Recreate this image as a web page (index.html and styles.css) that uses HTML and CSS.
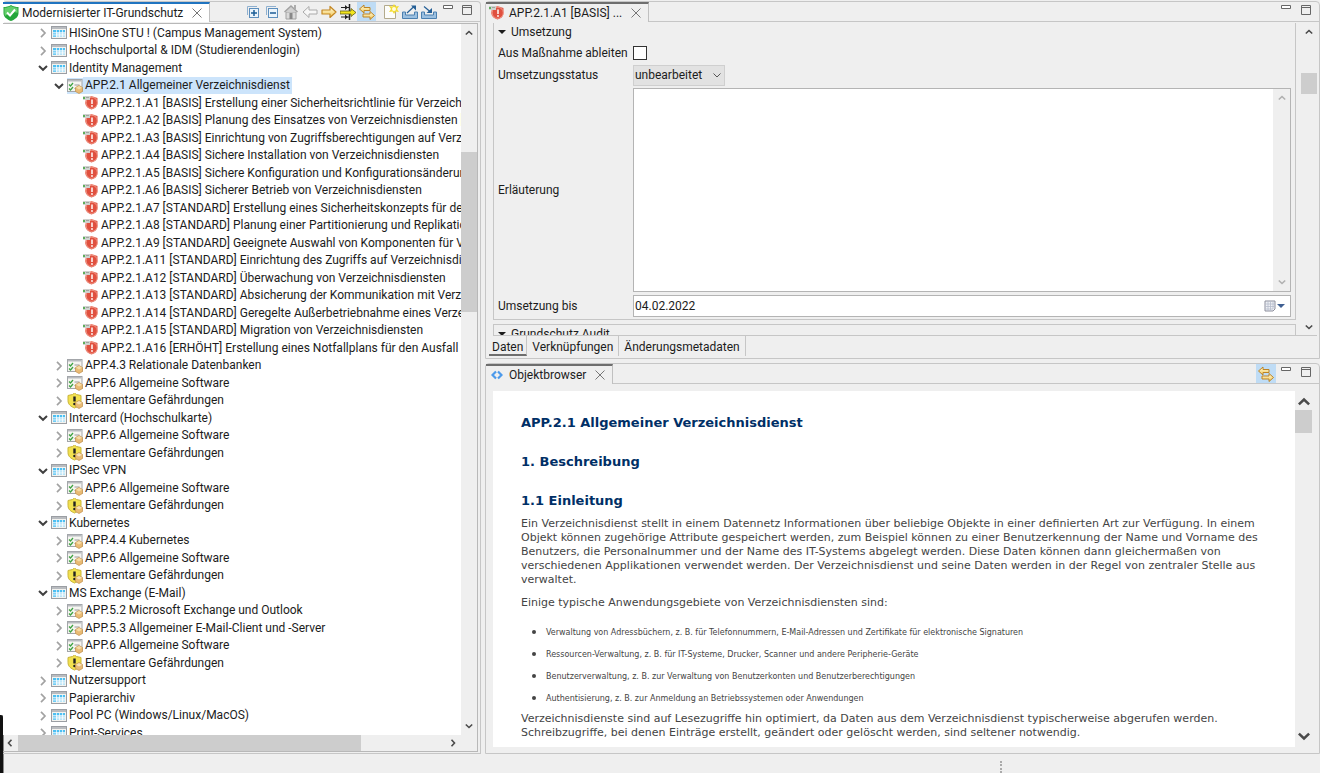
FILE: index.html
```html
<!DOCTYPE html>
<html lang="de">
<head>
<meta charset="utf-8">
<title>Modernisierter IT-Grundschutz</title>
<link rel="stylesheet" href="styles.css">
</head>
<body>
<svg class="defs" aria-hidden="true">
  <defs>
    <linearGradient id="g-gold" x2="0" y2="1"><stop offset="0" stop-color="#fffbe0"/><stop offset="1" stop-color="#f3c752"/></linearGradient>
    <linearGradient id="g-red" x1="0" x2="1" y2="1"><stop offset="0" stop-color="#f0907e"/><stop offset="1" stop-color="#d53a2e"/></linearGradient>
    <symbol id="i-closed" viewBox="0 0 12 12"><path d="M4 1.8 8 6 4 10.2" fill="none" stroke="#a2a2a2" stroke-width="1.7"/></symbol>
    <symbol id="i-open" viewBox="0 0 12 12"><path d="M2 4 6 7.8 10 4" fill="none" stroke="#404040" stroke-width="2"/></symbol>
    <symbol id="i-table" viewBox="0 0 16 16"><rect x=".5" y="1.500" width="15" height="12" fill="#f4f3ef" stroke="#9b9ea3"/><path d="M1 2h14v2H1z" fill="#b9bcc0"/><path d="M2 5h12v7H2z" fill="#b9e4f7"/><path d="M2 5h12v2.500H2z" fill="#4dbff2"/><path d="M2 7h3v5H2z" fill="#6fccf5"/><path d="M5.500 5v7M8.500 5v7M11.500 5v7M2 7.700h12M2 9.900h12" stroke="#fff" stroke-width=".7"/></symbol>
    <symbol id="i-module" viewBox="0 0 16 16"><rect x=".5" y="1.500" width="14.500" height="12" fill="#f6f5f1" stroke="#a3a6aa"/><path d="M1 2h13.500v1.500H1z" fill="#b9bcc0"/><path d="m2 6.500 1.500 1.500L6 5M2 10.500 3.500 12 6 9" fill="none" stroke="#3fa343" stroke-width="1.300"/><path d="M7.500 7h5M7.500 10.500h2" stroke="#9a9a9a"/><path d="m12 7.500 3.500 2v4L12 15.500l-3.500-2v-4z" fill="#e9bb74" stroke="#c28f49" stroke-width=".7"/><path d="m12 8 3 1.700-3 1.800-3-1.800z" fill="#f7dda8"/></symbol>
    <symbol id="i-threat" viewBox="0 0 16 16"><path d="M7.500 0 9.500 1.500 14 2.500v5c0 4-3 6-6.500 7.500C4 13.500 1 11.500 1 7.500v-5l4.500-1z" fill="#f2e14f" stroke="#c9b53b"/><path d="M7.500 3.500v5" stroke="#222" stroke-width="2.400"/><circle cx="7.500" cy="11" r="1.300" fill="#222"/><path d="m12 7.500 3.500 2v4L12 15.500l-3.500-2v-4z" fill="#e9bb74" stroke="#c28f49" stroke-width=".7"/><path d="m12 8 3 1.700-3 1.800-3-1.800z" fill="#f9e3b7"/></symbol>
    <symbol id="i-req" viewBox="0 0 16 16"><path d="M3 3 8.500 1l6 2v5c0 3.500-2.500 5.500-6 6.500C5 13.500 2.500 11.500 2 8z" fill="url(#g-red)"/><circle cx="8.700" cy="7.800" r="5.600" fill="#e0503f" stroke="#f3a292" stroke-width=".8"/><path d="M9 4.500V9" stroke="#fff" stroke-width="1.500"/><circle cx="9" cy="11" r=".9" fill="#fff"/><path d="M0 1h7v4H0z" fill="#cfd2cf"/><path d="M0 2h2v2H0z" fill="#5cae5b"/><path d="M3 2.500h3" stroke="#a0a6a0"/></symbol>
    <symbol id="i-shield" viewBox="0 0 16 16"><path d="M8 0c2 1.500 5 2 7.500 2v6c0 4-3.500 6.500-7.500 8-4-1.500-7.500-4-7.500-8V2C3 2 6 1.500 8 0z" fill="#24a63a"/><path d="M8 1c2 1.200 4 1.700 6.500 1.800V8C13 6 6 8 2 11 1 9 1.500 5 1.500 2.800 4 2.700 6 2.200 8 1z" fill="#64cf6b"/><path d="m4 7.500 3 3 5-6" fill="none" stroke="#fff" stroke-width="2"/></symbol>
    <symbol id="i-x" viewBox="0 0 10 10"><path d="m.5.5 9 9m0-9-9 9" stroke="#777" stroke-width="1"/></symbol>
    <symbol id="i-plus" viewBox="0 0 16 16"><path d="M2.500 11V2.500H12" fill="none" stroke="#8fb0cf"/><rect x="4.500" y="4.500" width="9" height="9" fill="#eaf4fc" stroke="#5d8fbd"/><path d="M6 9h6M9 6v6" stroke="#1b5d97" stroke-width="1.500"/></symbol>
    <symbol id="i-minus" viewBox="0 0 16 16"><path d="M2.500 11V2.500H12" fill="none" stroke="#8fb0cf"/><rect x="4.500" y="4.500" width="9" height="9" fill="#eaf4fc" stroke="#5d8fbd"/><path d="M6 9h6" stroke="#1b5d97" stroke-width="1.500"/></symbol>
    <symbol id="i-home" viewBox="0 0 16 16"><path d="M3 8h10v7H3z" fill="#dadada" stroke="#a2a2a2"/><path d="m1.500 8 6.500-6 6.500 6" fill="#d0d0d0" stroke="#a2a2a2" stroke-width="1.400"/><path d="M11 1h2v4h-2z" fill="#adadad"/><path d="M6.500 9h3v6h-3z" fill="#888"/></symbol>
    <symbol id="i-left" viewBox="0 0 16 16"><path d="M1 8 7 2.500V6h8v4H7v3.500z" fill="#f7f7f7" stroke="#aaa" stroke-linejoin="round"/></symbol>
    <symbol id="i-right" viewBox="0 0 16 16"><path d="M15 8 9 2.500V6H1v4h8v3.500z" fill="url(#g-gold)" stroke="#c48723" stroke-width="1.200" stroke-linejoin="round"/></symbol>
    <symbol id="i-filter" viewBox="0 0 16 16"><path d="M1 3.500h8M1 13h8" stroke="#222" stroke-width="1.200"/><path d="m5 1 3 2.500L5 6zM5 10.500 8 13l-3 2.500z" fill="#222"/><path d="M9.500 0v16" stroke="#222" stroke-width="1.500"/><path d="M0 7h11V4.500L16 8.500l-5 4V10H0z" fill="#f2e51d" stroke="#5d5a16" stroke-width=".8"/></symbol>
    <symbol id="i-link" viewBox="0 0 16 16"><path d="M.5 5 5 1v2.500h6v3H5V9z" fill="url(#g-gold)" stroke="#bd8424"/><path d="M15.500 11.500 11 7.500V10H4v3h7v2.500z" fill="url(#g-gold)" stroke="#bd8424"/></symbol>
    <symbol id="i-new" viewBox="0 0 16 16"><path d="M1.500 1.500h11v13h-11z" fill="#fdfdfb" stroke="#b3aa8c"/><path d="M11 0 12.500 2.500 16 2l-2 3 2 3-3.500-.5L11 10 9.500 7.500 6 8l2-3-2-3 3.500.5z" fill="#f4dd33"/><circle cx="11" cy="5" r="2" fill="#fffce0"/></symbol>
    <symbol id="i-export" viewBox="0 0 16 16"><path d="M.5 8v6.500h15V8h-3v3h-9V8z" fill="#9cc0e0" stroke="#4c80b0"/><path d="m5 9 7-6.500" stroke="#245f96" stroke-width="1.200"/><path d="M9 1.500h5v5z" fill="#245f96"/></symbol>
    <symbol id="i-import" viewBox="0 0 16 16"><path d="M.5 8v6.500h15V8h-3v3h-9V8z" fill="#9cc0e0" stroke="#4c80b0"/><path d="m3 2.500 6 5" stroke="#245f96" stroke-width="1.200"/><path d="M11 4v5H5.500z" fill="#245f96"/></symbol>
    <symbol id="i-min" viewBox="0 0 12 12"><path d="M1.500 1.500h9v3h-9z" fill="#fff" stroke="#666"/></symbol>
    <symbol id="i-max" viewBox="0 0 12 12"><path d="M1.500 1.500h9v9h-9zM1.500 3.500h9" fill="none" stroke="#666"/></symbol>
    <symbol id="i-code" viewBox="0 0 12 12"><path d="M5 2.500 1.500 6 5 9.500M7 2.500l3.500 3.500L7 9.500" fill="none" stroke="#4c9aeb" stroke-width="2.200"/></symbol>
    <symbol id="i-up" viewBox="0 0 10 10"><path d="M1.800 6.500 5 3.500l3.200 3" fill="none" stroke="currentColor" stroke-width="1.600"/></symbol>
    <symbol id="i-down" viewBox="0 0 10 10"><path d="M1.800 3.500 5 6.500l3.200-3" fill="none" stroke="currentColor" stroke-width="1.600"/></symbol>
    <symbol id="i-thin" viewBox="0 0 10 10"><path d="M1.500 3.500 5 7l3.500-3.500" fill="none" stroke="currentColor"/></symbol>
    <symbol id="i-prev" viewBox="0 0 10 10"><path d="M6.500 1.800 3.500 5l3 3.200" fill="none" stroke="currentColor" stroke-width="1.600"/></symbol>
    <symbol id="i-next" viewBox="0 0 10 10"><path d="M3.500 1.800 6.500 5l-3 3.200" fill="none" stroke="currentColor" stroke-width="1.600"/></symbol>
    <symbol id="i-cal" viewBox="0 0 12 12"><path d="M1 1h10v8l-2 2H1z" fill="#eef0f5" stroke="#8d8f9c"/><path d="M1 4h10M1 6.500h10M1 9h8M4 1v10M6.500 1v10M9 1v8" stroke="#b6bccb" stroke-width=".8"/></symbol>
    <symbol id="i-tri" viewBox="0 0 8 8"><path d="M0 2h8L4 6z" fill="currentColor"/></symbol>
  </defs>
</svg>
<div class="edge"><i class="edge-line"></i><i class="edge-dark"></i></div>
<div class="app">
  <main class="workbench">
    <section class="pane nav-pane">
      <header class="pane-head">
        <div class="tab tab-active"><svg class="i16"><use href="#i-shield"/></svg><span>Modernisierter IT-Grundschutz</span><button class="close" aria-label="Schließen"><svg class="i10"><use href="#i-x"/></svg></button></div>
        <div class="tools">
          <button aria-label="Alle ausklappen"><svg class="i16"><use href="#i-plus"/></svg></button>
          <button aria-label="Alle einklappen"><svg class="i16"><use href="#i-minus"/></svg></button>
          <button aria-label="Start"><svg class="i16"><use href="#i-home"/></svg></button>
          <button aria-label="Zurück"><svg class="i16"><use href="#i-left"/></svg></button>
          <button aria-label="Vor"><svg class="i16"><use href="#i-right"/></svg></button>
          <button aria-label="Filter"><svg class="i16"><use href="#i-filter"/></svg></button>
          <button class="on" aria-label="Verknüpfen"><svg class="i16"><use href="#i-link"/></svg></button>
          <button class="gap-before" aria-label="Neu"><svg class="i16"><use href="#i-new"/></svg></button>
          <button aria-label="Exportieren"><svg class="i16"><use href="#i-export"/></svg></button>
          <button aria-label="Importieren"><svg class="i16"><use href="#i-import"/></svg></button>
          <button class="win" aria-label="Minimieren"><svg class="i12"><use href="#i-min"/></svg></button>
          <button class="win" aria-label="Maximieren"><svg class="i12"><use href="#i-max"/></svg></button>
        </div>
      </header>
      <div class="tree-frame">
        <ul class="tree">
          <li class="l1"><svg class="i12"><use href="#i-closed"/></svg><svg class="i16"><use href="#i-table"/></svg><span>HISinOne STU ! (Campus Management System)</span></li>
          <li class="l1"><svg class="i12"><use href="#i-closed"/></svg><svg class="i16"><use href="#i-table"/></svg><span>Hochschulportal &amp; IDM (Studierendenlogin)</span></li>
          <li class="l1"><svg class="i12"><use href="#i-open"/></svg><svg class="i16"><use href="#i-table"/></svg><span>Identity Management</span></li>
          <li class="l2 selected"><svg class="i12"><use href="#i-open"/></svg><svg class="i16"><use href="#i-module"/></svg><span>APP.2.1 Allgemeiner Verzeichnisdienst</span></li>
          <li class="l3"><svg class="i16"><use href="#i-req"/></svg><span>APP.2.1.A1 [BASIS] Erstellung einer Sicherheitsrichtlinie für Verzeichnisdienste</span></li>
          <li class="l3"><svg class="i16"><use href="#i-req"/></svg><span>APP.2.1.A2 [BASIS] Planung des Einsatzes von Verzeichnisdiensten [Datenschutz]</span></li>
          <li class="l3"><svg class="i16"><use href="#i-req"/></svg><span>APP.2.1.A3 [BASIS] Einrichtung von Zugriffsberechtigungen auf Verzeichnisdienste</span></li>
          <li class="l3"><svg class="i16"><use href="#i-req"/></svg><span>APP.2.1.A4 [BASIS] Sichere Installation von Verzeichnisdiensten</span></li>
          <li class="l3"><svg class="i16"><use href="#i-req"/></svg><span>APP.2.1.A5 [BASIS] Sichere Konfiguration und Konfigurationsänderungen</span></li>
          <li class="l3"><svg class="i16"><use href="#i-req"/></svg><span>APP.2.1.A6 [BASIS] Sicherer Betrieb von Verzeichnisdiensten</span></li>
          <li class="l3"><svg class="i16"><use href="#i-req"/></svg><span>APP.2.1.A7 [STANDARD] Erstellung eines Sicherheitskonzepts für den Einsatz</span></li>
          <li class="l3"><svg class="i16"><use href="#i-req"/></svg><span>APP.2.1.A8 [STANDARD] Planung einer Partitionierung und Replikation</span></li>
          <li class="l3"><svg class="i16"><use href="#i-req"/></svg><span>APP.2.1.A9 [STANDARD] Geeignete Auswahl von Komponenten für Verzeichnisdienste</span></li>
          <li class="l3"><svg class="i16"><use href="#i-req"/></svg><span>APP.2.1.A11 [STANDARD] Einrichtung des Zugriffs auf Verzeichnisdienste</span></li>
          <li class="l3"><svg class="i16"><use href="#i-req"/></svg><span>APP.2.1.A12 [STANDARD] Überwachung von Verzeichnisdiensten</span></li>
          <li class="l3"><svg class="i16"><use href="#i-req"/></svg><span>APP.2.1.A13 [STANDARD] Absicherung der Kommunikation mit Verzeichnisdiensten</span></li>
          <li class="l3"><svg class="i16"><use href="#i-req"/></svg><span>APP.2.1.A14 [STANDARD] Geregelte Außerbetriebnahme eines Verzeichnisdienstes</span></li>
          <li class="l3"><svg class="i16"><use href="#i-req"/></svg><span>APP.2.1.A15 [STANDARD] Migration von Verzeichnisdiensten</span></li>
          <li class="l3"><svg class="i16"><use href="#i-req"/></svg><span>APP.2.1.A16 [ERHÖHT] Erstellung eines Notfallplans für den Ausfall eines Verzeichnisdienstes</span></li>
          <li class="l2"><svg class="i12"><use href="#i-closed"/></svg><svg class="i16"><use href="#i-module"/></svg><span>APP.4.3 Relationale Datenbanken</span></li>
          <li class="l2"><svg class="i12"><use href="#i-closed"/></svg><svg class="i16"><use href="#i-module"/></svg><span>APP.6 Allgemeine Software</span></li>
          <li class="l2"><svg class="i12"><use href="#i-closed"/></svg><svg class="i16"><use href="#i-threat"/></svg><span>Elementare Gefährdungen</span></li>
          <li class="l1"><svg class="i12"><use href="#i-open"/></svg><svg class="i16"><use href="#i-table"/></svg><span>Intercard (Hochschulkarte)</span></li>
          <li class="l2"><svg class="i12"><use href="#i-closed"/></svg><svg class="i16"><use href="#i-module"/></svg><span>APP.6 Allgemeine Software</span></li>
          <li class="l2"><svg class="i12"><use href="#i-closed"/></svg><svg class="i16"><use href="#i-threat"/></svg><span>Elementare Gefährdungen</span></li>
          <li class="l1"><svg class="i12"><use href="#i-open"/></svg><svg class="i16"><use href="#i-table"/></svg><span>IPSec VPN</span></li>
          <li class="l2"><svg class="i12"><use href="#i-closed"/></svg><svg class="i16"><use href="#i-module"/></svg><span>APP.6 Allgemeine Software</span></li>
          <li class="l2"><svg class="i12"><use href="#i-closed"/></svg><svg class="i16"><use href="#i-threat"/></svg><span>Elementare Gefährdungen</span></li>
          <li class="l1"><svg class="i12"><use href="#i-open"/></svg><svg class="i16"><use href="#i-table"/></svg><span>Kubernetes</span></li>
          <li class="l2"><svg class="i12"><use href="#i-closed"/></svg><svg class="i16"><use href="#i-module"/></svg><span>APP.4.4 Kubernetes</span></li>
          <li class="l2"><svg class="i12"><use href="#i-closed"/></svg><svg class="i16"><use href="#i-module"/></svg><span>APP.6 Allgemeine Software</span></li>
          <li class="l2"><svg class="i12"><use href="#i-closed"/></svg><svg class="i16"><use href="#i-threat"/></svg><span>Elementare Gefährdungen</span></li>
          <li class="l1"><svg class="i12"><use href="#i-open"/></svg><svg class="i16"><use href="#i-table"/></svg><span>MS Exchange (E-Mail)</span></li>
          <li class="l2"><svg class="i12"><use href="#i-closed"/></svg><svg class="i16"><use href="#i-module"/></svg><span>APP.5.2 Microsoft Exchange und Outlook</span></li>
          <li class="l2"><svg class="i12"><use href="#i-closed"/></svg><svg class="i16"><use href="#i-module"/></svg><span>APP.5.3 Allgemeiner E-Mail-Client und -Server</span></li>
          <li class="l2"><svg class="i12"><use href="#i-closed"/></svg><svg class="i16"><use href="#i-module"/></svg><span>APP.6 Allgemeine Software</span></li>
          <li class="l2"><svg class="i12"><use href="#i-closed"/></svg><svg class="i16"><use href="#i-threat"/></svg><span>Elementare Gefährdungen</span></li>
          <li class="l1"><svg class="i12"><use href="#i-closed"/></svg><svg class="i16"><use href="#i-table"/></svg><span>Nutzersupport</span></li>
          <li class="l1"><svg class="i12"><use href="#i-closed"/></svg><svg class="i16"><use href="#i-table"/></svg><span>Papierarchiv</span></li>
          <li class="l1"><svg class="i12"><use href="#i-closed"/></svg><svg class="i16"><use href="#i-table"/></svg><span>Pool PC (Windows/Linux/MacOS)</span></li>
          <li class="l1"><svg class="i12"><use href="#i-closed"/></svg><svg class="i16"><use href="#i-table"/></svg><span>Print-Services</span></li>
        </ul>
        <div class="vbar"><svg class="i10"><use href="#i-up"/></svg><div class="track tree-track"><i class="thumb"></i></div><svg class="i10"><use href="#i-down"/></svg></div>
        <div class="hbar"><svg class="i10"><use href="#i-prev"/></svg><div class="htrack"><i class="hthumb"></i></div><svg class="i10"><use href="#i-next"/></svg></div>
      </div>
    </section>
    <div class="right">
      <section class="pane">
        <header class="pane-head">
          <div class="tab"><svg class="i16"><use href="#i-req"/></svg><span>APP.2.1.A1 [BASIS] ...</span><button class="close" aria-label="Schließen"><svg class="i10"><use href="#i-x"/></svg></button></div>
          <div class="tools">
            <button class="win" aria-label="Minimieren"><svg class="i12"><use href="#i-min"/></svg></button>
            <button class="win" aria-label="Maximieren"><svg class="i12"><use href="#i-max"/></svg></button>
          </div>
        </header>
        <div class="form-area">
          <form class="form">
            <div class="group">
              <h2><svg class="i8"><use href="#i-tri"/></svg>Umsetzung</h2>
              <div class="field check-field"><label for="derive">Aus Maßnahme ableiten</label><input type="checkbox" id="derive"></div>
              <div class="field status-field"><label for="status">Umsetzungsstatus</label><div class="select-wrap"><select id="status"><option>unbearbeitet</option></select><svg class="i10"><use href="#i-thin"/></svg></div></div>
              <div class="field note-field"><label for="note">Erläuterung</label><div class="note-wrap"><textarea id="note"></textarea><div class="vbar faint"><svg class="i10"><use href="#i-up"/></svg><svg class="i10"><use href="#i-down"/></svg></div></div></div>
              <div class="field"><label for="until">Umsetzung bis</label><div class="date-wrap"><input type="text" id="until" value="04.02.2022"><button type="button" aria-label="Kalender"><svg class="i12"><use href="#i-cal"/></svg><svg class="i8"><use href="#i-tri"/></svg></button></div></div>
            </div>
            <div class="group next-group"><h2><svg class="i8"><use href="#i-tri"/></svg>Grundschutz Audit</h2></div>
          </form>
          <div class="vbar"><svg class="i10"><use href="#i-up"/></svg><div class="track form-track"><i class="thumb"></i></div><svg class="i10"><use href="#i-down"/></svg></div>
        </div>
        <nav class="pages"><button class="current">Daten</button><button>Verknüpfungen</button><button>Änderungsmetadaten</button></nav>
      </section>
      <section class="pane">
        <header class="pane-head">
          <div class="tab"><svg class="i12"><use href="#i-code"/></svg><span>Objektbrowser</span><button class="close" aria-label="Schließen"><svg class="i10"><use href="#i-x"/></svg></button></div>
          <div class="tools">
            <button class="on" aria-label="Verknüpfen"><svg class="i16"><use href="#i-link"/></svg></button>
            <button class="win" aria-label="Minimieren"><svg class="i12"><use href="#i-min"/></svg></button>
            <button class="win" aria-label="Maximieren"><svg class="i12"><use href="#i-max"/></svg></button>
          </div>
        </header>
        <div class="browser">
          <article class="doc">
            <h1>APP.2.1 Allgemeiner Verzeichnisdienst</h1>
            <h1>1. Beschreibung</h1>
            <h1>1.1 Einleitung</h1>
            <p>Ein Verzeichnisdienst stellt in einem Datennetz Informationen über beliebige Objekte in einer definierten Art zur Verfügung. In einem Objekt können zugehörige Attribute gespeichert werden, zum Beispiel können zu einer Benutzerkennung der Name und Vorname des Benutzers, die Personalnummer und der Name des IT-Systems abgelegt werden. Diese Daten können dann gleichermaßen von verschiedenen Applikationen verwendet werden. Der Verzeichnisdienst und seine Daten werden in der Regel von zentraler Stelle aus verwaltet.</p>
            <p>Einige typische Anwendungsgebiete von Verzeichnisdiensten sind:</p>
            <ul>
              <li>Verwaltung von Adressbüchern, z. B. für Telefonnummern, E-Mail-Adressen und Zertifikate für elektronische Signaturen</li>
              <li>Ressourcen-Verwaltung, z. B. für IT-Systeme, Drucker, Scanner und andere Peripherie-Geräte</li>
              <li>Benutzerverwaltung, z. B. zur Verwaltung von Benutzerkonten und Benutzerberechtigungen</li>
              <li>Authentisierung, z. B. zur Anmeldung an Betriebssystemen oder Anwendungen</li>
            </ul>
            <p>Verzeichnisdienste sind auf Lesezugriffe hin optimiert, da Daten aus dem Verzeichnisdienst typischerweise abgerufen werden. Schreibzugriffe, bei denen Einträge erstellt, geändert oder gelöscht werden, sind seltener notwendig.</p>
          </article>
          <div class="vbar big"><svg class="i16"><use href="#i-up"/></svg><div class="track doc-track"><i class="thumb"></i></div><svg class="i16"><use href="#i-down"/></svg></div>
        </div>
      </section>
    </div>
  </main>
  <footer class="status"><i class="grip"></i></footer>
</div>
</body>
</html>
```

FILE: styles.css
```css
* { box-sizing: border-box; }
body {
  margin: 0;
  height: 100vh;
  display: flex;
  overflow: hidden;
  background: #efefef;
  color: #1c1c1c;
  font: 12px/16px Roboto, "Noto Sans", sans-serif;
}
button, input, select, textarea { font: inherit; color: inherit; }
button { border: 0; padding: 0; background: none; display: flex; align-items: center; justify-content: center; }
svg { flex: none; display: block; }
.defs { position: absolute; width: 0; height: 0; }
.i8 { width: 8px; height: 8px; }
.i10 { width: 10px; height: 10px; }
.i12 { width: 12px; height: 12px; }
.i16 { width: 16px; height: 16px; }

.edge { width: 4px; margin-right: -1px; background: #fff; display: flex; flex-direction: column; justify-content: flex-end; }
.edge-line { height: 238px; border-right: 1px solid #8a8a8a; }
.edge-dark { height: 58px; background: #111; border-right: 1px solid #8a8a8a; border-radius: 0 3px 0 0; }

.app { flex: 1; min-width: 0; display: flex; flex-direction: column; }
.workbench {
  flex: 1;
  min-height: 0;
  display: grid;
  grid-template-columns: minmax(0, 478fr) minmax(0, 835fr);
  column-gap: 4px;
  padding-top: 1px;
}
.right { display: grid; grid-template-rows: minmax(0, 358fr) minmax(0, 390fr); row-gap: 4px; min-height: 0; }
.pane {
  min-width: 0;
  min-height: 0;
  display: flex;
  flex-direction: column;
  border: 1px solid #c6c6c6;
  border-radius: 4px 4px 0 0;
}
.nav-pane { border-left: 0; }

.pane-head { flex: none; height: 20px; display: flex; justify-content: space-between; border-bottom: 1px solid #c6c6c6; }
.tab {
  height: 20px;
  display: flex;
  align-items: center;
  gap: 4px;
  padding: 0 6px 0 3px;
  border-top: 2px solid #6e6e6e;
  border-right: 1px solid #c0c0c0;
  background: #efefef;
  white-space: nowrap;
}
.tab .i12 { margin: 0 2px; }
.tab-active { border-top-color: #2074c0; background: #fff; padding-left: 0; }
.tab-active .i16 { margin-right: -1px; }
.close { width: 12px; height: 12px; margin-left: 4px; }
.tools { display: flex; align-items: center; padding-right: 3px; }
.tools button { width: 20px; height: 19px; }
.nav-pane .tools { padding-right: 4px; }
.nav-pane .tools button { width: 19px; }
.nav-pane .tools .gap-before { margin-left: 4px; }
.nav-pane .tools .on + .gap-before { margin-left: 5px; }
.tools .on { background: #bfdcf5; }
.tools .win { padding-bottom: 3px; }

.tree-frame {
  flex: 1;
  min-height: 0;
  display: grid;
  grid-template: minmax(0, 1fr) 16px / minmax(0, 1fr) 16px;
  margin: 1px 2px 1px 0;
  border: 1px solid #b8b8b8;
  border-left: 0;
}
.tree { margin: 0; padding: 0; list-style: none; overflow: hidden; background: #fff; border-left: 1px solid #fff; }
.tree li { height: 18px; display: flex; align-items: center; white-space: nowrap; }
.tree li:nth-child(even) { height: 17px; }
.tree span { line-height: 17px; padding: 0 2px; }
.tree .i12 { margin-right: 2px; }
.l1 { padding-left: 33px; }
.l2 { padding-left: 49px; }
.l3 { padding-left: 79px; }
.selected .i16, .selected span { background: #cce4fb; }

.vbar { display: flex; flex-direction: column; align-items: center; justify-content: space-between; padding: 4px 0; background: #efefef; color: #4a4a4a; }
.track { flex: 1; width: 100%; display: flex; flex-direction: column; }
.thumb { background: #cdcdcd; }
.tree-track::before { content: ""; flex: 114; }
.tree-track .thumb { flex: 159; }
.tree-track::after { content: ""; flex: 408; }
.form-track::before { content: ""; flex: 36; }
.form-track .thumb { flex: 20; }
.form-track::after { content: ""; flex: 226; }
.doc-track .thumb { height: 23px; }
.hbar { display: flex; align-items: center; gap: 3px; padding: 0 3px 0 2px; color: #4a4a4a; }
.htrack { flex: 1; height: 100%; display: flex; }
.hthumb { flex: 344; background: #cdcdcd; }
.htrack::after { content: ""; flex: 84; }

.form-area { flex: 1; min-height: 0; display: flex; gap: 5px; margin: 1px 2px 0 7px; border-bottom: 1px solid #c6c6c6; }
.form { flex: 1; min-width: 0; overflow: hidden; }
.group { border: 1px solid #c6c6c6; border-top: 0; padding: 0 4px 2px; display: flex; flex-direction: column; }
.group h2 { margin: 0; height: 18px; display: flex; align-items: center; gap: 5px; font: inherit; }
.next-group { margin-top: 4px; border-top: 1px solid #c6c6c6; }
.field { display: grid; grid-template-columns: 135px minmax(0, 1fr); align-items: center; height: 22px; }
.field label { white-space: nowrap; }
.check-field { height: 23px; }
.check-field input { appearance: none; width: 14px; height: 14px; margin: 0; border: 1px solid #333; background: #fff; }
.status-field { margin-bottom: 2px; }
.select-wrap { display: flex; align-items: center; width: 92px; height: 21px; border: 1px solid #cfcfcf; background: #e2e2e2; position: relative; }
.select-wrap select { appearance: none; width: 100%; height: 100%; padding: 0 1px; border: 0; background: none; }
.select-wrap svg { position: absolute; right: 2px; color: #555; pointer-events: none; }
.note-field { height: 204px; margin-bottom: 3px; }
.note-wrap, .date-wrap { display: flex; height: 100%; border: 1px solid #b4b4b4; background: #fff; }
.note-wrap textarea { flex: 1; min-width: 0; border: 0; padding: 2px; resize: none; background: none; outline: 0; }
.note-wrap .vbar { width: 17px; }
.faint { color: #b0b0b0; }
.date-wrap input { flex: 1; min-width: 0; padding: 0 1px; border: 0; background: none; }
.date-wrap button { gap: 1px; padding-right: 5px; color: #3f5f92; }
.form-area > .vbar { width: 16px; padding-bottom: 3px; }

.pages { flex: none; height: 22px; display: flex; padding-left: 3px; }
.pages button { padding: 2px 5px 0; border-right: 1px solid #c6c6c6; height: 20px; }
.pages .current { border-bottom: 2px solid #6e6e6e; padding: 3px 3px 0; }

.browser { flex: 1; min-height: 0; display: flex; margin: 7px 7px 6px; }
.doc { flex: 1; min-width: 0; overflow: hidden; background: #fff; padding: 24px 18px 0 28px; color: #444; font: 11px/14px "DejaVu Sans", sans-serif; }
.doc h1 { margin: 0 0 23px; font-size: 13px; line-height: 16px; color: #002f66; }
.doc h1:nth-of-type(3) { margin-bottom: 8px; }
.doc p { margin: 0 0 9px; }
.doc ul { margin: 0 0 8px; padding: 5px 0 0 25px; font-size: 8px; }
.doc li { height: 14px; margin-bottom: 8px; }
.doc li::marker { font-size: 12px; }
.browser .big { width: 17px; padding: 3px 0; }

.status { flex: none; height: 19px; display: flex; padding-left: 75%; padding-top: 7px; }
.grip { width: 2px; height: 12px; border-left: 2px dotted #aaa; margin-left: 9px; }
```
